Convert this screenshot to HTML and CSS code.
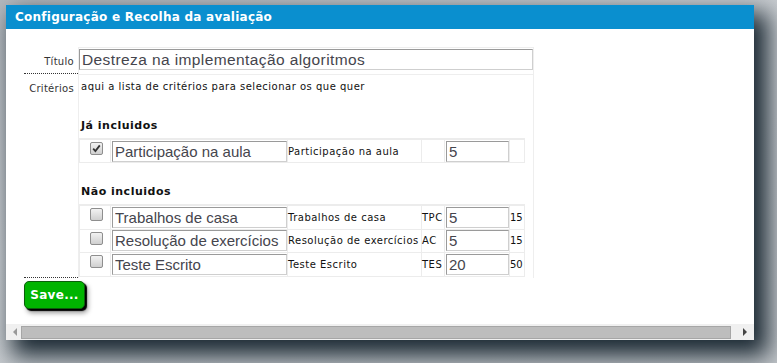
FILE: index.html
```html
<!DOCTYPE html>
<html lang="pt">
<head>
  <meta charset="UTF-8" />
  <title>Configuração e Recolha da avaliação</title>
  <link rel="stylesheet" href="styles.css">
</head>
<body>
  <div class="dialog">
    <div class="dialog-title">Configuração e Recolha da avaliação</div>
    <div class="dialog-body">
      <div class="form">
        <div class="label row1">Título</div>
        <div class="field row1">
          <input class="title-input" type="text" value="Destreza na implementação algoritmos">
        </div>

        <div class="label row2">Critérios</div>
        <div class="field row2">
          <p class="hint">aqui a lista de critérios para selecionar os que quer</p>

          <h4>Já incluidos</h4>
          <table class="crit">
            <tr>
              <td class="c-cb"><span class="cb checked"><svg width="9" height="9" viewBox="0 0 9 9"><path d="M1.2 4.6 L3.4 7 L7.8 1.4" fill="none" stroke="#333" stroke-width="1.8"/></svg></span></td>
              <td class="c-in"><input class="name-input" type="text" value="Participação na aula"></td>
              <td class="c-name">Participação na aula</td>
              <td class="c-code"></td>
              <td class="c-val"><input class="val-input" type="text" value="5"></td>
              <td class="c-max"></td>
            </tr>
          </table>

          <h4 class="next">Não incluidos</h4>
          <table class="crit multi">
            <tr>
              <td class="c-cb"><span class="cb"></span></td>
              <td class="c-in"><input class="name-input" type="text" value="Trabalhos de casa"></td>
              <td class="c-name">Trabalhos de casa</td>
              <td class="c-code">TPC</td>
              <td class="c-val"><input class="val-input" type="text" value="5"></td>
              <td class="c-max">15</td>
            </tr>
            <tr>
              <td class="c-cb"><span class="cb"></span></td>
              <td class="c-in"><input class="name-input" type="text" value="Resolução de exercícios"></td>
              <td class="c-name">Resolução de exercícios</td>
              <td class="c-code">AC</td>
              <td class="c-val"><input class="val-input" type="text" value="5"></td>
              <td class="c-max">15</td>
            </tr>
            <tr>
              <td class="c-cb"><span class="cb"></span></td>
              <td class="c-in"><input class="name-input" type="text" value="Teste Escrito"></td>
              <td class="c-name">Teste Escrito</td>
              <td class="c-code">TES</td>
              <td class="c-val"><input class="val-input" type="text" value="20"></td>
              <td class="c-max">50</td>
            </tr>
          </table>
        </div>
      </div>

      <button class="save">Save...</button>
    </div>
    <div class="hscroll">
      <span class="arrow left"></span>
      <div class="thumb"></div>
      <span class="arrow right"></span>
    </div>
  </div>
</body>
</html>
```

FILE: styles.css
```css
html, body { margin: 0; padding: 0; height: 100%; overflow: hidden; }
body {
  background: linear-gradient(160deg, #b4b9be 0%, #c9cdd1 40%, #c3c7cb 100%);
  font-family: "DejaVu Sans", Verdana, sans-serif;
  color: #222;
}

.dialog {
  margin: 5px 0 0 6px;
  width: 748px;
  height: 335px;
  background: #fff;
  display: flex;
  flex-direction: column;
  box-shadow: 10px 12px 22px 4px rgba(28, 42, 52, 1);
}
.dialog-title {
  height: 24px;
  line-height: 24px;
  background: #0a8fcf;
  color: #fff;
  font-weight: bold;
  font-size: 12px;
  padding-left: 9px;
  letter-spacing: 0.25px;
}
.dialog-body { flex: 1; padding: 18px 0 0 18px; }

/* form grid: label | field */
.form { display: grid; grid-template-columns: 54px 456px; }
.label {
  font-size: 10px;
  letter-spacing: 0.3px;
  color: #333;
  text-align: right;
  padding-right: 4px;
  border-bottom: 1px dotted #333;
}
.field {
  border-left: 1px solid #eee;
  border-right: 1px solid #eee;
  border-bottom: 1px solid #eee;
}
.row1.label { height: 27px; padding-top: 9px; box-sizing: border-box; }
.row1.field { height: 28px; box-sizing: border-box; padding-top: 1px; border-top: 1px solid #eee; }
.row2.label { height: 203px; padding-top: 8px; box-sizing: border-box; }
.row2.field { height: 203px; box-sizing: border-box; border-bottom: none; }

input { font-family: "Liberation Sans", Arial, sans-serif; color: #45454d; outline: none; }
.title-input {
  width: 454px; height: 21px; box-sizing: border-box;
  font-size: 15.5px; letter-spacing: 0.4px; padding: 0 2px; margin: 0;
  border: 1px solid; border-color: #9a9a9a #cfcfcf #cfcfcf #9a9a9a;
}

.hint { margin: 6px 0 0 2px; font-size: 10px; letter-spacing: 0.5px; color: #111; }
h4 { margin: 27px 0 6px 2px; font-size: 11px; font-weight: bold; color: #111; letter-spacing: 0.5px; }
h4.next { margin-top: 22px; margin-bottom: 6px; }

.crit { border-collapse: collapse; font-size: 10px; letter-spacing: 0.5px; color: #111; }
.crit td { border: 1px solid #ececec; height: 22px; padding: 0; }
.crit.multi td { height: 22.5px; }
.crit tr:first-child td { border-top: 2px solid #ececec; }
.c-cb { width: 30px; vertical-align: top; }
.c-in { width: 176px; }
.c-name { width: 133px; white-space: nowrap; }
.c-code { width: 22px; }
.c-val { width: 64px; }
.c-max { width: 14px; letter-spacing: 0; }

.name-input {
  display: block; width: 175px; height: 21px; box-sizing: border-box; margin: 0 0 0 1px;
  font-size: 15px; padding: 0 2px;
  border: 1px solid; border-color: #9a9a9a #cfcfcf #cfcfcf #9a9a9a;
}
.val-input {
  display: block; width: 63px; height: 21px; box-sizing: border-box; margin: 0 0 0 1px;
  font-size: 15px; padding: 0 2px;
  border: 1px solid; border-color: #9a9a9a #cfcfcf #cfcfcf #9a9a9a;
}

.cb {
  display: block; width: 11px; height: 11px; margin: 2px 0 0 10px;
  border: 1px solid #8e8e8e; border-radius: 2px;
  background: linear-gradient(#f2f2f2, #cfcfcf);
  position: relative;
}
.cb svg { position: absolute; left: 1px; top: 1px; }

.save {
  margin: 3px 0 0 0;
  width: 61px; height: 28px;
  background: #00b400;
  border: 1px solid #0a5e0a;
  border-radius: 5px;
  color: #fff;
  font-family: "DejaVu Sans", Verdana, sans-serif;
  font-weight: bold; font-size: 12px;
  letter-spacing: 0.3px;
  padding: 0;
  box-shadow: 2px 2px 1px #000, 3px 4px 5px rgba(0,0,0,0.4);
}

.hscroll {
  height: 16px;
  background: #f0f0f0;
  display: flex;
  align-items: center;
  padding: 0 4px;
}
.thumb {
  flex: 1; height: 11px; margin: 0 12px 0 4px;
  background: #bdbdbd; border: 1px solid #a6a6a6;
}
.arrow { width: 0; height: 0; border-top: 4px solid transparent; border-bottom: 4px solid transparent; }
.arrow.left { border-right: 4px solid #999; margin-left: 3px; }
.arrow.right { border-left: 4px solid #444; margin-right: 3px; }
```
